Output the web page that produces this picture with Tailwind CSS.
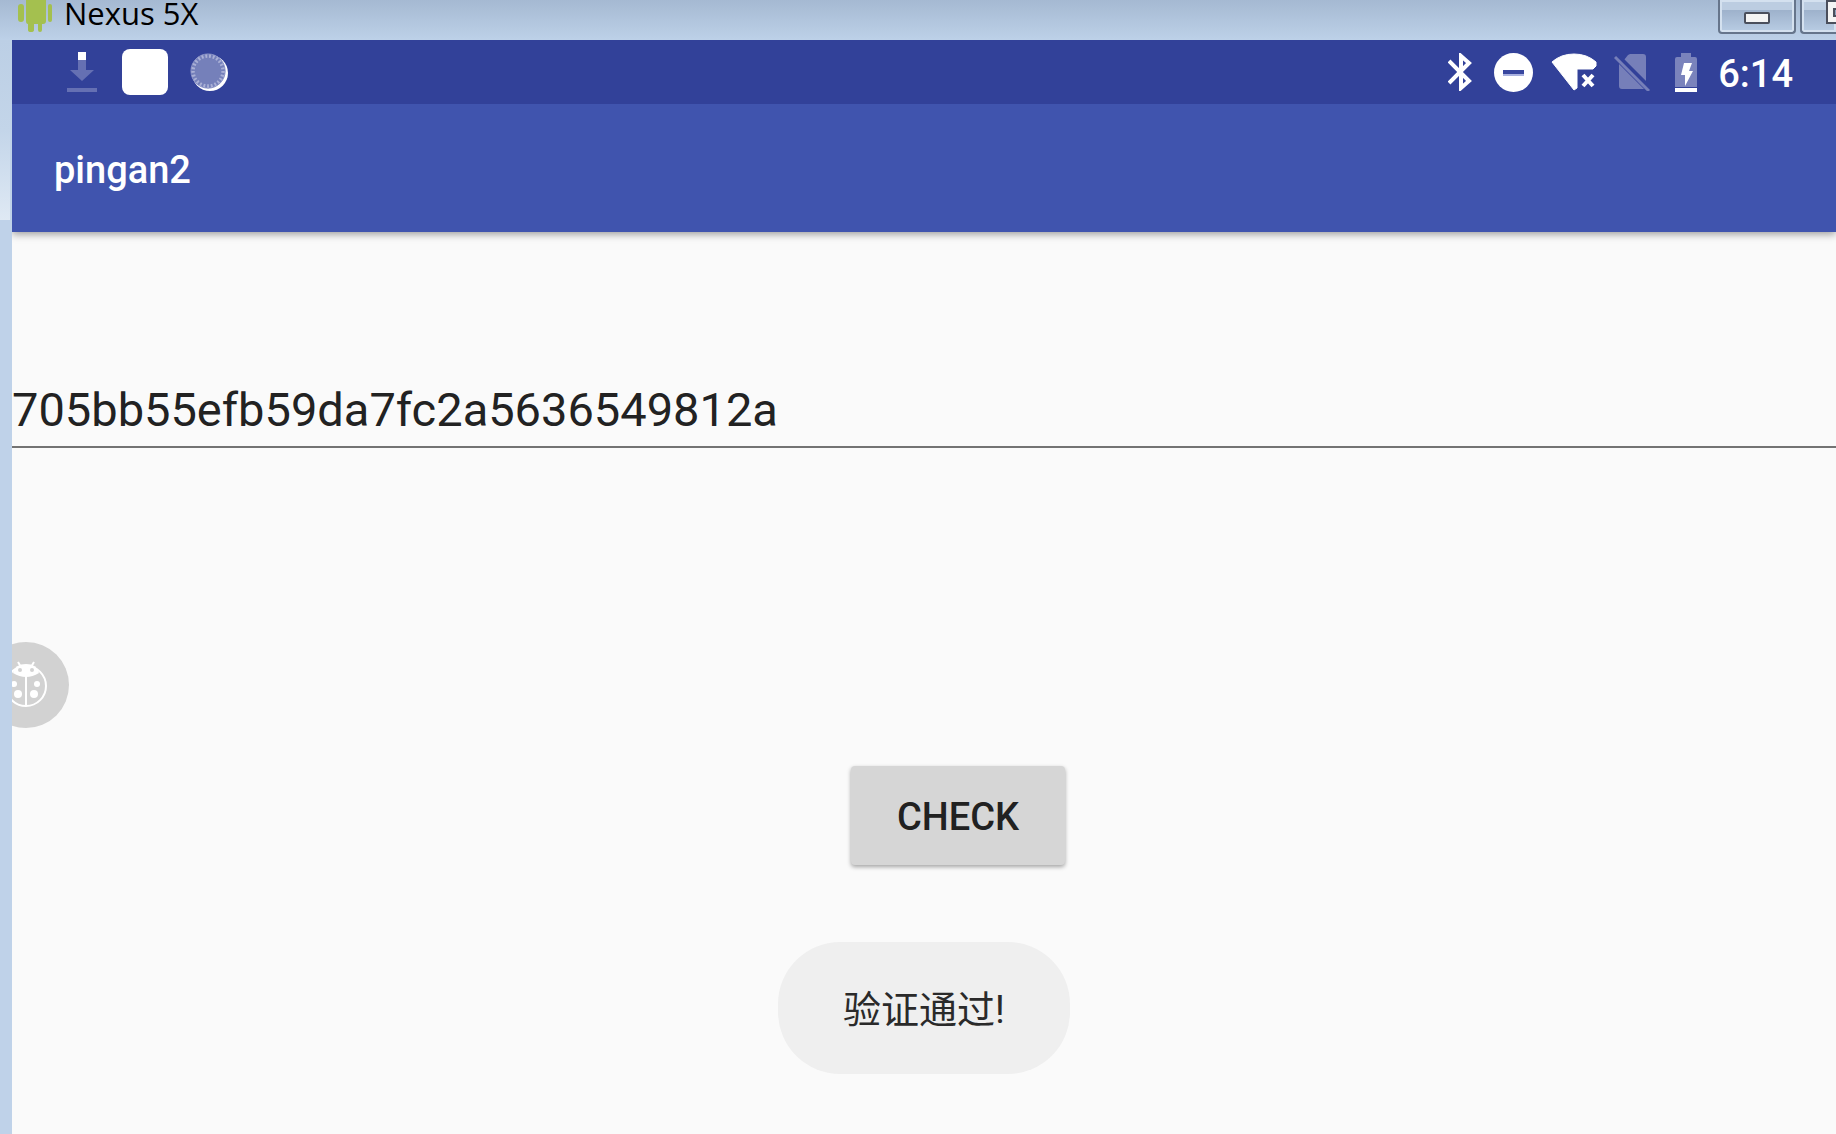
<!DOCTYPE html>
<html lang="en">
<head>
<meta charset="utf-8">
<title>Nexus 5X</title>
<script src="https://cdn.jsdelivr.net/npm/@tailwindcss/browser@4"></script>
</head>
<body class="flex h-screen flex-col overflow-hidden bg-[#fafafa] font-['Roboto','Noto_Sans_CJK_SC',sans-serif]">
  <header class="flex h-10 shrink-0 items-start bg-linear-to-b from-[#a5b9d2] to-[#bdd1e8]">
    <svg class="ml-[18px] h-8 w-[34px] shrink-0" viewBox="0 0 34 32" fill="#a4c04f" aria-hidden="true">
      <path d="M8 0h20v21q0 3-3 3h-1v6q0 2-2 2t-2-2v-6h-4v6q0 2-3 2t-3-2v-6q-2 0-2-3z"/>
      <rect x="0" y="4" width="6" height="18" rx="3"/><rect x="30" y="4" width="4" height="18" rx="2"/>
    </svg>
    <h1 class="ml-3 font-['Open_Sans',sans-serif] text-[31px] leading-[26px] text-black">Nexus 5X</h1>
    <div class="ml-auto flex gap-1">
      <button aria-label="Minimize" class="flex h-[34px] w-[78px] items-end justify-center rounded-b border-2 border-t-0 border-[#66758b] bg-linear-to-b from-[#bccde1] from-30% via-[#9db1cb] via-30% to-[#b9cde4] pb-2 shadow-[inset_0_0_0_2px_#d4e1ef]">
        <span class="h-3 w-[26px] rounded-xs border-2 border-[#4a4f5c] bg-[#f4f4f4]"></span>
      </button>
      <button aria-label="Maximize" class="flex h-[34px] w-9 items-start justify-end overflow-hidden rounded-bl border-2 border-t-0 border-r-0 border-[#66758b] bg-linear-to-b from-[#bccde1] from-30% via-[#9db1cb] via-30% to-[#b9cde4] shadow-[inset_0_0_0_2px_#d4e1ef]">
        <svg class="h-6 w-[10px]" viewBox="0 0 10 24"><path d="M11 1H1v22h10" fill="#f4f4f4" stroke="#4a4f5c" stroke-width="2"/><path d="M11 9H8v7h3" fill="#8da2bc" stroke="#4a4f5c" stroke-width="2"/></svg>
      </button>
    </div>
  </header>

  <div class="flex min-h-0 grow">
    <div class="flex w-3 shrink-0 flex-col bg-[#bfd2e9]">
      <div class="h-[180px] w-[10px] bg-linear-to-b from-[#bccfe5] via-[#c3d5e9] to-[#dfe9f4]"></div>
    </div>
    <main class="relative flex min-w-0 grow flex-col overflow-hidden">
      <div class="z-20 flex h-16 shrink-0 items-center bg-[#324199] pr-[43px] pl-[54px] text-white">
        <svg class="h-10 w-8" viewBox="0 0 32 40" aria-hidden="true"><path d="M12 8h8v10h8L16 29 4 18h8zM1 36h30v4H1z" fill="#6570b3"/><path d="M12 0h8v8h-8z" fill="#fff"/></svg>
        <span class="ml-6 size-[46px] rounded-lg bg-white"></span>
        <svg class="ml-[22px] size-[38px]" viewBox="0 0 40 40" aria-hidden="true"><circle cx="21" cy="21" r="19" fill="#fff"/><circle cx="19" cy="19" r="18" fill="#7580ba"/><circle cx="19" cy="19" r="16" fill="none" stroke="#aab0d6" stroke-width="4" stroke-dasharray="2 2"/><circle cx="19" cy="19" r="18" fill="none" stroke="#8b94c6" stroke-width="1"/></svg>
        <svg class="ml-auto h-[38px] w-6" viewBox="0 0 24 38" fill="none" stroke="#fff" stroke-width="4" aria-hidden="true"><path d="M1 8l20 20-8 7V3l8 7L1 30"/></svg>
        <svg class="ml-[22px] size-[39px]" viewBox="0 0 39 39" aria-hidden="true"><circle cx="19.500" cy="19.500" r="19.500" fill="#fff"/><path d="M9 17h21v4H9z" fill="#38469f"/><path d="M9 21h21v2H9z" fill="#a9b1e0"/></svg>
        <svg class="ml-[18px] h-[38px] w-[46px]" viewBox="0 0 46 38" aria-hidden="true"><path d="M1 9Q10 1 23 1t22 8v4l-3 3H26v19l-3 2z" fill="#fff" stroke="#fff" stroke-linejoin="round"/><path d="M32 22l10 11M42 22L32 33" stroke="#fff" stroke-width="4"/></svg>
        <svg class="ml-[17px] h-[38px] w-9" viewBox="0 0 36 38" aria-hidden="true"><path d="M10 7l4-5 2-1h13q3 0 3 3v27zM5 11l25 25H8q-3 0-3-3z" fill="#767fb9"/><path d="M1 4l34 34" stroke="#767fb9" stroke-width="3"/><path d="M9 7l24 24" stroke="#324199" stroke-width="3"/></svg>
        <svg class="ml-6 h-[39px] w-6" viewBox="0 0 24 39" aria-hidden="true"><path d="M7 0h10v4h4q2 0 2 2v28H1V6q0-2 2-2h4z" fill="#7a83bc"/><path d="M1 35h22v4H1z" fill="#fff"/><path d="M10 10h8l-3 8h4L11 33v-11H7z" fill="#fff"/></svg>
        <time class="ml-5 pt-[3px] text-[38px] leading-[44px] font-medium">6:14</time>
      </div>
      <div class="z-10 flex h-32 shrink-0 items-center bg-[#4054ae] px-[42px] pt-[3px] shadow-[0_2px_8px_rgba(0,0,0,0.4)]">
        <h2 class="text-[38px] leading-[44px] font-medium text-white">pingan2</h2>
      </div>
      <input aria-label="Code" type="text" value="705bb55efb59da7fc2a5636549812a" spellcheck="false" class="mt-[148px] block h-[68px] w-full shrink-0 border-b-2 border-[#737373] bg-transparent pb-2 text-[47px] leading-[56px] text-[#222] outline-none">
      <div class="mt-[318px] flex shrink-0 justify-center pl-[68px]">
        <button class="h-[99px] w-[214px] rounded-sm bg-[#d6d6d6] pt-[3px] text-[38px] leading-[44px] font-medium text-[#212121] shadow-[0_2px_4px_rgba(0,0,0,0.35)]">CHECK</button>
      </div>
      <div role="status" class="mx-auto mt-[77px] flex h-[132px] w-[292px] shrink-0 items-center justify-center rounded-[62px] bg-[#efefef] pt-[3px] text-[38px] leading-[44px] text-[#2a2a2a]">验证通过!</div>
      <button aria-label="Debug" class="absolute top-[602px] -left-[29px] size-[86px] rounded-full bg-[#d2d2d2]">
        <svg class="size-[86px]" viewBox="0 0 86 86" aria-hidden="true"><path d="M35 20l3 5M51 20l-3 5" stroke="#fff" stroke-width="2"/><path d="M30 31q2-9 13-9t13 9q-13 8-26 0z" fill="#fff"/><circle cx="43" cy="44" r="20" fill="none" stroke="#fff" stroke-width="2"/><path d="M43 34v30" stroke="#fff" stroke-width="2"/><circle cx="37" cy="28" r="2" fill="#d2d2d2"/><circle cx="49" cy="28" r="2" fill="#d2d2d2"/><g fill="#fff"><circle cx="31" cy="42" r="3"/><circle cx="54" cy="42" r="3"/><circle cx="35" cy="52" r="4"/><circle cx="51" cy="52" r="4"/></g></svg>
      </button>
    </main>
  </div>
</body>
</html>
